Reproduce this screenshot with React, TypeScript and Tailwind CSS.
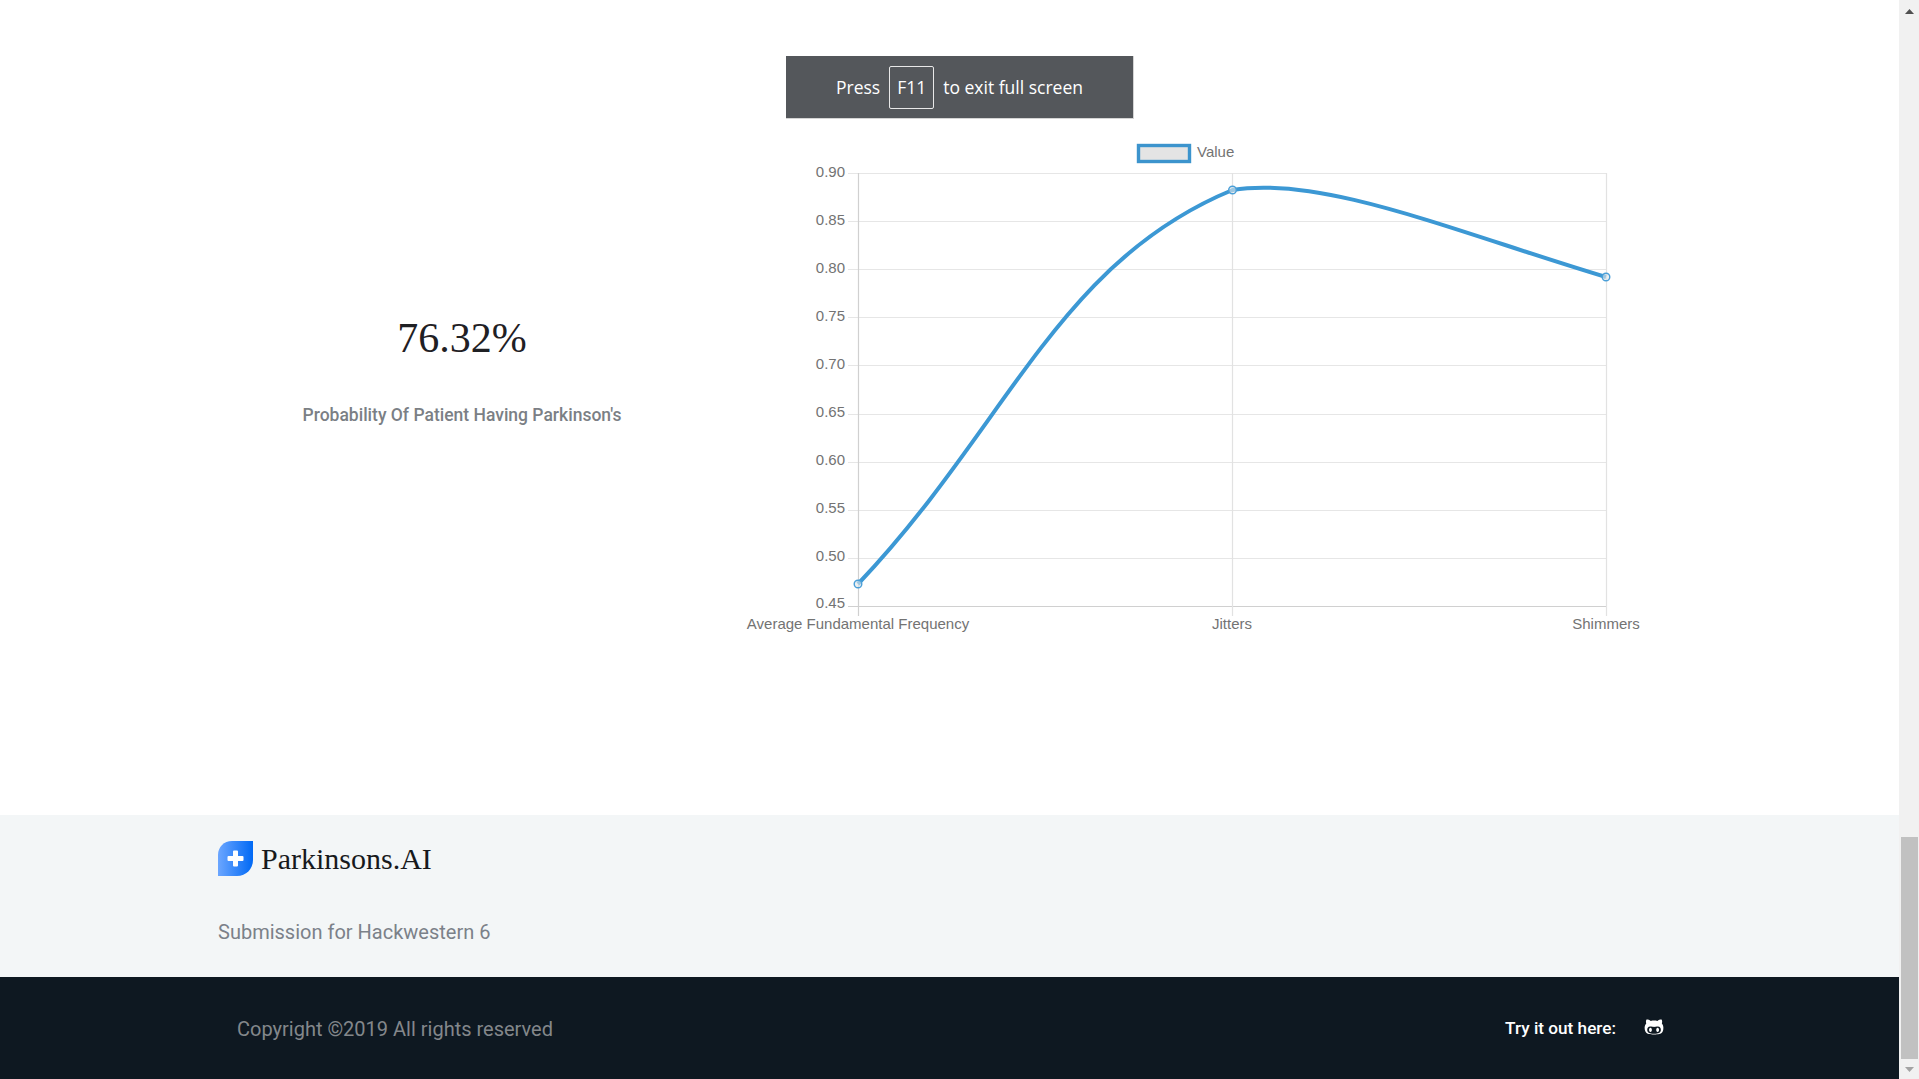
import React from "react";
import { FaGithubAlt } from "react-icons/fa";

const yLabels = ["0.90", "0.85", "0.80", "0.75", "0.70", "0.65", "0.60", "0.55", "0.50", "0.45"];
const top = 173;
const step = 48.11;
const xs = [858.5, 1232.5, 1606.5];
const xLabels = ["Average Fundamental Frequency", "Jitters", "Shimmers"];
const points = [
  [858, 584],
  [1232.5, 190],
  [1606, 277],
];

function Chart() {
  return (
    <svg viewBox="706 0 970 815" className="block h-[815px] w-[970px]" style={{ fontFamily: '"Liberation Sans", Arial, sans-serif' }}>
      {yLabels.map((l, i) => {
        const y = Math.round(top + i * step) + 0.5;
        return (
          <g key={l}>
            <line x1={848} x2={1607} y1={y} y2={y} stroke={i === 9 ? "#d0d0d0" : "#e6e6e6"} strokeWidth={1.2} />
            <text x={845} y={177.3 + i * 47.9} textAnchor="end" fontSize={15} fill="#737373">
              {l}
            </text>
          </g>
        );
      })}
      {xs.map((x, i) => (
        <g key={x}>
          <line x1={x} x2={x} y1={top} y2={616} stroke={i === 0 ? "#d0d0d0" : "#e2e2e2"} strokeWidth={1.2} />
          <text x={x - 0.5} y={629} textAnchor="middle" fontSize={15} fill="#737373">
            {xLabels[i]}
          </text>
        </g>
      ))}
      <rect x={1138.5} y={145.5} width={51} height={16} fill="#e4e4e4" stroke="#3c94cd" strokeWidth={3.4} />
      <text x={1197} y={157} fontSize={15} fill="#737373">
        Value
      </text>
      <path d="M858 584C1007.8 426.4 1057 262 1232.5 190C1322 175 1456 232 1606 277" fill="none" stroke="#3c98d4" strokeWidth={4} />
      {points.map(([x, y]) => (
        <circle key={x} cx={x} cy={y} r={3.8} fill="#dfe6ea" fillOpacity={0.6} stroke="#4a9fd8" strokeWidth={1.4} />
      ))}
    </svg>
  );
}

function Logo() {
  return (
    <svg width="35" height="35" viewBox="0 0 35 35" className="shrink-0">
      <defs>
        <linearGradient id="leaf" x1="0" y1="0.5" x2="1" y2="0.5">
          <stop offset="0" stopColor="#6ba6ff" />
          <stop offset="1" stopColor="#0069f5" />
        </linearGradient>
      </defs>
      <path d="M14 0H35V19C35 28 28 35 19 35H0V14C0 6 6 0 14 0Z" fill="url(#leaf)" />
      <path d="M15 10.500a1 1 0 0 1 1-1h3a1 1 0 0 1 1 1V15h4.500a1 1 0 0 1 1 1v3a1 1 0 0 1-1 1H20v4.500a1 1 0 0 1-1 1h-3a1 1 0 0 1-1-1V20h-4.500a1 1 0 0 1-1-1v-3a1 1 0 0 1 1-1H15Z" fill="#fff" />
    </svg>
  );
}

function Scrollbar() {
  return (
    <div className="flex h-full w-[20px] shrink-0 flex-col bg-[#f1f1f1]">
      <div className="flex h-[17px] items-center justify-center pl-[1px]">
        <svg width="9" height="5" viewBox="0 0 9 5" className="mt-[6px]">
          <path d="M4.500 0L9 5H0Z" fill="#505050" />
        </svg>
      </div>
      <div className="flex-1" />
      <div className="ml-[2px] h-[222px] w-[17px] bg-[#c1c1c1]" />
      <div className="flex h-[20px] items-center justify-center pl-[1px]">
        <svg width="9" height="5" viewBox="0 0 9 5">
          <path d="M0 0H9L4.500 5Z" fill="#a3a3a3" />
        </svg>
      </div>
    </div>
  );
}

export default function App() {
  return (
    <div className="relative flex h-[1079px] w-[1919px] overflow-hidden bg-white" style={{ fontFamily: "Roboto, sans-serif" }}>
      <div className="flex min-w-0 flex-1 flex-col">
        <main className="flex h-[815px] shrink-0 pl-[218px]">
          <section className="flex w-[488px] shrink-0 flex-col items-center pt-[305px]">
            <h2 className="text-[42px] leading-[66px] text-[#1f2024]" style={{ fontFamily: '"Liberation Serif", serif' }}>
              76.32%
            </h2>
            <p className="mt-[31px] text-[17.5px] leading-[27px] font-medium text-[#7b7f85]">Probability Of Patient Having Parkinson's</p>
          </section>
          <Chart />
        </main>

        <section className="h-[162px] shrink-0 bg-[#f3f6f7] pt-[26px] pl-[218px]">
          <div className="flex h-[35px] items-center gap-[8px]">
            <Logo />
            <span className="text-[30px] leading-[35px] text-[#17191c]" style={{ fontFamily: '"Liberation Serif", serif' }}>
              Parkinsons.AI
            </span>
          </div>
          <p className="mt-[41px] text-[20px] leading-[30px] text-[#7b8189]">Submission for Hackwestern 6</p>
        </section>

        <footer className="flex h-[102px] shrink-0 items-center bg-[#0e1821] pr-[235px] pl-[237px]">
          <p className="mt-[2px] text-[20px] leading-[30px] text-[#83878b]">Copyright ©2019 All rights reserved</p>
          <span className="mt-[1px] ml-auto text-[17.2px] leading-[27px] font-medium text-white">Try it out here:</span>
          <FaGithubAlt className="mt-[-3px] ml-[28px] text-[20px] text-white" />
        </footer>
      </div>

      <Scrollbar />

      <div
        className="absolute top-[56px] left-[786px] flex h-[63px] w-[348px] items-center justify-center border-r border-b border-[#d4d4d4] bg-[#54575b] text-[17.5px] text-white"
        style={{ fontFamily: '"Open Sans", sans-serif' }}
      >
        <span>Press</span>
        <span className="mr-[9px] ml-[9px] flex h-[43px] w-[45px] items-center justify-center rounded-[2px] border border-[#e8e8e8]">F11</span>
        <span>to exit full screen</span>
      </div>
    </div>
  );
}
